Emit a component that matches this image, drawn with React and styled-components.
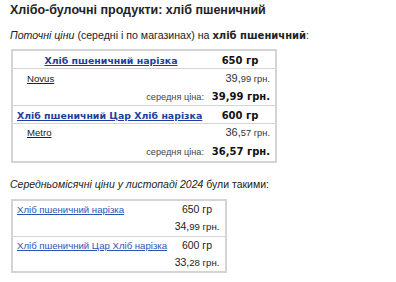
import React from "react";
import styled, { createGlobalStyle } from "styled-components";

const GlobalStyle = createGlobalStyle`
  body {
    margin: 0;
    background: #fff;
    font-family: "Liberation Sans", Arial, sans-serif;
    color: #222;
  }
`;

const Page = styled.div`
  padding: 2px 10px 0 10px;
`;

const Title = styled.h2`
  margin: 0;
  font-size: 12.5px;
  line-height: 17px;
  font-weight: 700;
  color: #222;
`;

const Lead = styled.p`
  margin: 0;
  padding-top: 9px;
  font-size: 10.6px;
  line-height: 15px;
  color: #222;
  em { font-style: italic; }
  b { font-family: "DejaVu Sans", Verdana, sans-serif; font-size: 10px; }
`;

const PriceTable = styled.table`
  border-collapse: collapse;
  table-layout: fixed;
  width: ${(p) => p.$width}px;
  margin: ${(p) => p.$top}px 0 0 1px;
  border: 2px solid #d4d4d4;
`;

const Row = styled.tr`
  border-top: ${(p) => (p.$split ? "1px solid #d4d4d4" : "none")};
`;

const Cell = styled.td`
  padding: ${(p) => p.$pad || "0 5px"};
  height: ${(p) => p.$h || 18}px;
  line-height: 12px;
  text-align: ${(p) => p.$align || "left"};
  vertical-align: middle;
  white-space: nowrap;
  overflow: hidden;
  width: ${(p) => (p.$w ? `${p.$w}px` : "auto")};
`;

const ProductLink = styled.a`
  font-family: "DejaVu Sans", Verdana, sans-serif;
  font-weight: 700;
  font-size: 9.4px;
  color: #1f3e9e;
  text-decoration: underline;
`;

const Weight = styled.span`
  font-family: "DejaVu Sans", Verdana, sans-serif;
  font-weight: 700;
  font-size: 10px;
  color: #111;
`;

const ShopLink = styled.a`
  font-size: 9.6px;
  color: #222;
  text-decoration: underline;
`;

const Price = styled.span`
  font-size: 11px;
  color: #333;
  small { font-size: 9.3px; }
`;

const AvgLabel = styled.span`
  font-size: 9.2px;
  color: #444;
`;

const AvgPrice = styled.span`
  font-family: "DejaVu Sans", Verdana, sans-serif;
  font-weight: 700;
  font-size: 10px;
  color: #111;
`;

const Monthly = styled.p`
  margin: 0;
  padding-top: 14px;
  font-size: 10.5px;
  line-height: 14px;
  font-style: italic;
  color: #222;
  span { font-style: normal; }
`;

const MonthLink = styled.a`
  font-size: 9.6px;
  color: #2b55b5;
  text-decoration: underline;
`;

const MonthValue = styled.span`
  font-size: 10.5px;
  color: #222;
  small { font-size: 9.6px; }
`;

const current = [
  { name: "Хліб пшеничний нарізка", weight: "650 гр", shop: "Novus", int: "39,", dec: "99", avg: "39,99 грн.", center: true, rows: [17, 18, 18] },
  { name: "Хліб пшеничний Цар Хліб нарізка", weight: "600 гр", shop: "Metro", int: "36,", dec: "57", avg: "36,57 грн.", rows: [17, 16, 21] },
];

const monthly = [
  { name: "Хліб пшеничний нарізка", weight: "650 гр", int: "34,", dec: "99", rows: [15, 20] },
  { name: "Хліб пшеничний Цар Хліб нарізка", weight: "600 гр", int: "33,", dec: "28", rows: [15, 19] },
];

export default function App() {
  return (
    <>
      <GlobalStyle />
      <Page>
        <Title>Хлібо-булочні продукти: хліб пшеничний</Title>
        <Lead>
          <em>Поточні ціни</em> (середні і по магазинах) на <b>хліб пшеничний</b>:
        </Lead>
        <PriceTable $width={266} $top={6}>
          <tbody>
            {current.map((item, i) => (
              <React.Fragment key={item.name}>
                <Row $split={i > 0}>
                  <Cell
                    $align={item.center ? "center" : "left"}
                    $pad="0 0 0 4px"
                    $h={item.rows[0]}
                  >
                    <ProductLink href="#">{item.name}</ProductLink>
                  </Cell>
                  <Cell $align="center" $w={60} $h={item.rows[0]}>
                    <Weight>{item.weight}</Weight>
                  </Cell>
                </Row>
                <Row $split>
                  <Cell $pad="0 5px 0 14px" $h={item.rows[1]}>
                    <ShopLink href="#">{item.shop}</ShopLink>
                  </Cell>
                  <Cell $align="right" $h={item.rows[1]}>
                    <Price>
                      {item.int}
                      <small>{item.dec} грн.</small>
                    </Price>
                  </Cell>
                </Row>
                <Row>
                  <Cell $align="right" $pad="0 1px 0 5px" $h={item.rows[2]}>
                    <AvgLabel>середня ціна:</AvgLabel>
                  </Cell>
                  <Cell $align="right" $h={item.rows[2]}>
                    <AvgPrice>{item.avg}</AvgPrice>
                  </Cell>
                </Row>
              </React.Fragment>
            ))}
          </tbody>
        </PriceTable>
        <Monthly>
          Середньомісячні ціни у листопаді 2024 <span>були такими:</span>
        </Monthly>
        <PriceTable $width={216} $top={8}>
          <tbody>
            {monthly.map((item, i) => (
              <React.Fragment key={item.name}>
                <Row $split={i > 0}>
                  <Cell $pad="0 0 0 4px" $h={item.rows[0]}>
                    <MonthLink href="#">{item.name}</MonthLink>
                  </Cell>
                  <Cell $align="center" $w={46} $h={item.rows[0]}>
                    <MonthValue>{item.weight}</MonthValue>
                  </Cell>
                </Row>
                <Row>
                  <Cell $h={item.rows[1]} />
                  <Cell $align="center" $pad="0" $h={item.rows[1]}>
                    <MonthValue>
                      {item.int}
                      <small>{item.dec} грн.</small>
                    </MonthValue>
                  </Cell>
                </Row>
              </React.Fragment>
            ))}
          </tbody>
        </PriceTable>
      </Page>
    </>
  );
}
